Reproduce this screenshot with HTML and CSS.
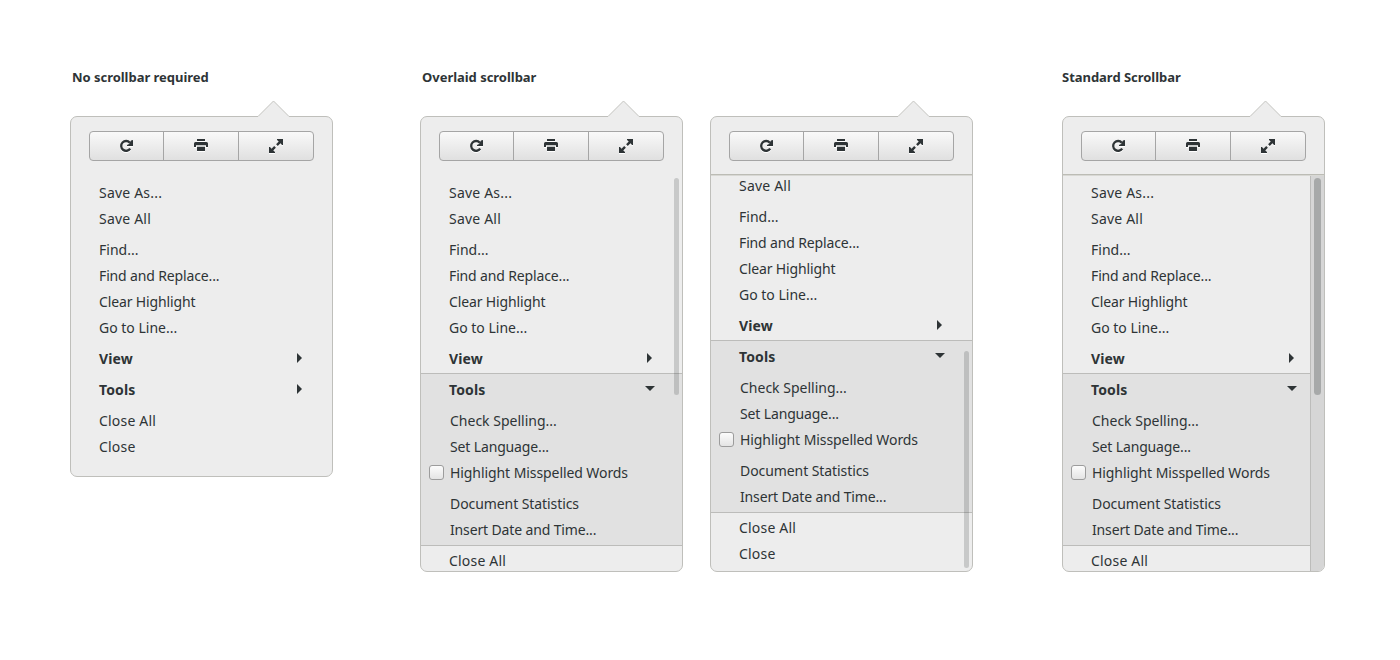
FILE: index.html
```html
<!DOCTYPE html>
<html lang="en">
<head>
<meta charset="utf-8">
<title>Popover scrolling</title>
<link rel="stylesheet" href="styles.css">
</head>
<body>
<svg class="defs" aria-hidden="true">
  <symbol id="refresh" viewBox="0 0 16 16"><path d="M11.200 10.600A4.900 4.900 0 1 1 10.800 4.700" fill="none" stroke="currentColor" stroke-width="2.300"/><path d="M14 2v6H8V7l2-1 2-3.500z"/></symbol>
  <symbol id="print" viewBox="0 0 16 16"><path d="M4 1h8v2H4zM2.500 4h11Q15 4 15 5.500V9h-2V7.500H3V9H1V5.500Q1 4 2.500 4zM4 8.500h8v4q0 .5-.5.5h-7q-.5 0-.5-.5z"/><path d="M3 7.500h10v1H3z" fill="#fff"/></symbol>
  <symbol id="expand" viewBox="0 0 16 16"><path d="M9 1h6v6h-1l-1.500-1.700-2.700 2.600-1.700-1.700 2.600-2.700L9 2zM1 9h1l1.500 1.700 2.700-2.600 1.700 1.700-2.600 2.700L7 14v1H1z"/></symbol>
  <symbol id="tip" viewBox="0 0 32 17"><path class="tip-fill" d="M0 17v-1L15.500 .7 31 16v1z"/><path class="tip-line" d="M0 16.500L15.500 1 31 16.500"/></symbol>
</svg>
<main class="board">
  <section class="example first">
    <h2>No scrollbar required</h2>
    <div class="pops">
      <div class="popover short">
        <svg class="tip"><use href="#tip"/></svg>
        <div class="head"><div class="buttons"><button><svg><use href="#refresh"/></svg></button><button><svg><use href="#print"/></svg></button><button><svg><use href="#expand"/></svg></button></div></div>
        <div class="view"><div class="list">
          <div class="group"><p class="wide">Save As...</p><p class="wide">Save All</p></div>
          <div class="group"><p>Find...</p><p class="tight">Find and Replace...</p><p class="tight">Clear Highlight</p><p>Go to Line...</p></div>
          <div class="group"><p class="sub">View<i class="right"></i></p></div>
          <div class="group"><p class="sub">Tools<i class="right"></i></p></div>
          <div class="group"><p class="wide">Close All</p><p class="wide">Close</p></div>
        </div></div>
      </div>
    </div>
  </section>

  <section class="example second">
    <h2>Overlaid scrollbar</h2>
    <div class="pops">
      <div class="popover">
        <svg class="tip"><use href="#tip"/></svg>
        <div class="head"><div class="buttons"><button><svg><use href="#refresh"/></svg></button><button><svg><use href="#print"/></svg></button><button><svg><use href="#expand"/></svg></button></div></div>
        <div class="view"><div class="list">
          <div class="group"><p class="wide">Save As...</p><p class="wide">Save All</p></div>
          <div class="group"><p>Find...</p><p class="tight">Find and Replace...</p><p class="tight">Clear Highlight</p><p>Go to Line...</p></div>
          <p class="sub">View<i class="right"></i></p>
          <div class="open">
            <p class="sub">Tools<i class="down"></i></p>
            <div class="group inner"><p>Check Spelling...</p><p class="tight">Set Language...</p><p class="check snug"><b class="box"></b>Highlight Misspelled Words</p></div>
            <div class="group inner"><p class="snug">Document Statistics</p><p class="tight">Insert Date and Time...</p></div>
          </div>
          <p class="wide">Close All</p>
        </div><span class="thumb top"></span></div>
      </div>
      <div class="popover ruled">
        <svg class="tip"><use href="#tip"/></svg>
        <div class="head"><div class="buttons"><button><svg><use href="#refresh"/></svg></button><button><svg><use href="#print"/></svg></button><button><svg><use href="#expand"/></svg></button></div></div>
        <div class="view"><div class="list scrolled">
          <div class="group"><p class="wide">Save All</p></div>
          <div class="group"><p>Find...</p><p class="tight">Find and Replace...</p><p class="tight">Clear Highlight</p><p>Go to Line...</p></div>
          <p class="sub">View<i class="right"></i></p>
          <div class="open">
            <p class="sub">Tools<i class="down"></i></p>
            <div class="group inner"><p>Check Spelling...</p><p class="tight">Set Language...</p><p class="check snug"><b class="box"></b>Highlight Misspelled Words</p></div>
            <div class="group inner"><p class="snug">Document Statistics</p><p class="tight">Insert Date and Time...</p></div>
          </div>
          <p class="wide">Close All</p><p class="wide">Close</p>
        </div><span class="thumb bottom"></span></div>
      </div>
    </div>
  </section>

  <section class="example third">
    <h2>Standard Scrollbar</h2>
    <div class="pops">
      <div class="popover ruled">
        <svg class="tip"><use href="#tip"/></svg>
        <div class="head"><div class="buttons"><button><svg><use href="#refresh"/></svg></button><button><svg><use href="#print"/></svg></button><button><svg><use href="#expand"/></svg></button></div></div>
        <div class="view"><div class="list">
          <div class="group"><p class="wide">Save As...</p><p class="wide">Save All</p></div>
          <div class="group"><p>Find...</p><p class="tight">Find and Replace...</p><p class="tight">Clear Highlight</p><p>Go to Line...</p></div>
          <p class="sub">View<i class="right"></i></p>
          <div class="open">
            <p class="sub">Tools<i class="down"></i></p>
            <div class="group inner"><p>Check Spelling...</p><p class="tight">Set Language...</p><p class="check snug"><b class="box"></b>Highlight Misspelled Words</p></div>
            <div class="group inner"><p class="snug">Document Statistics</p><p class="tight">Insert Date and Time...</p></div>
          </div>
          <p class="wide">Close All</p>
        </div><div class="trough"><span class="slider"></span></div></div>
      </div>
    </div>
  </section>
</main>
</body>
</html>
```
FILE: styles.css
```css
* { box-sizing: border-box; }
body {
  margin: 0;
  background: #fff;
  color: #2e3436;
  font: 14px/26px "Noto Sans", "Open Sans", sans-serif;
}
.defs { display: block; width: 0; height: 0; }
.board { display: flex; height: 660px; padding: 66px 0 0 70px; overflow: hidden; }
.second { margin-left: 87px; }
.third { margin-left: 89px; }
h2 { margin: 0 0 28px; padding-left: 2px; font-size: 13px; line-height: 22px; font-weight: 700; letter-spacing: -0.03px; }
.third h2 { padding-left: 0; }
.pops { display: flex; gap: 27px; }

.popover {
  position: relative;
  display: flex;
  flex-direction: column;
  width: 263px;
  height: 456px;
  border: 1px solid #bfbfbb;
  border-radius: 7px;
  background: #ededed;
}
.popover.short { height: 361px; }
.tip { position: absolute; left: 187px; top: -17px; width: 32px; height: 17px; }
.tip-fill { fill: #ededed; }
.tip-line { fill: none; stroke: #c6c6c2; }

.head { flex: none; height: 59px; padding: 14px 18px 0; }
.ruled .head { border-bottom: 1px solid #bcbcb5; height: 58px; }
.ruled .view { border-top: 1px solid #d8d8d4; }
.ruled .list { padding-top: 3px; }
.buttons {
  display: grid;
  grid-template-columns: 74px 75px 74px;
  height: 30px;
  border: 1px solid #a5a5a5;
  border-radius: 4px;
  background: linear-gradient(#f9f9f9, #e0e0e0);
  overflow: hidden;
}
button {
  display: flex;
  align-items: center;
  justify-content: center;
  padding: 0;
  border: 0;
  border-right: 1px solid #a5a5a5;
  background: none;
  color: #2e3436;
}
button:first-child { padding-left: 1px; }
button:last-child { border-right: 0; }
button svg { width: 16px; height: 16px; fill: currentColor; filter: drop-shadow(0 1px 0 #fff); }

.view { position: relative; display: flex; flex: 1; min-height: 0; border-radius: 0 0 6px 6px; overflow: hidden; }
.list { flex: 1; padding-top: 3px; }
.list.scrolled { margin-top: -7px; }
.group { margin-bottom: 5px; }
p { display: flex; align-items: center; height: 26px; margin: 0; padding-left: 28px; line-height: 26px; padding-top: 1px; white-space: nowrap; }
.wide { letter-spacing: .2px; }
.snug { letter-spacing: -.08px; }
.tight { letter-spacing: -.14px; }
.sub { font-weight: 700; letter-spacing: .1px; position: relative; }
.inner p { padding-left: 29px; }
.open { margin: 2px 0 1px; padding: 2px 0 3px; border: solid #bcbcba; border-width: 1px 0; background: #e1e1e1; }
.open .sub { margin-bottom: 5px; }
.open .group:last-child { margin-bottom: 0; }

.right { position: absolute; left: 226px; top: 8px; border: solid transparent; border-width: 5px 0 5px 5px; border-left-color: #2e3436; }
.down { position: absolute; left: 223.500px; top: 10px; border: solid transparent; border-width: 5px 5px 0; border-top-color: #2e3436; }
.inner .check { padding-left: 8px; gap: 6px; }
.box { width: 15px; height: 15px; margin-top: -1px; border: 1px solid #9c9c9c; border-radius: 3px; background: linear-gradient(#fcfcfc, #e4e4e4); }

.thumb { position: absolute; right: 3px; width: 5px; height: 217px; border-radius: 3px; background: rgba(70, 75, 75, .22); }
.thumb.top { top: 2px; }
.thumb.bottom { bottom: 3px; }
.trough { flex: none; width: 14px; padding: 2px 0 0 3px; border-left: 1px solid #bcbcba; background: #d6d6d6; }
.slider { display: block; width: 7px; height: 217px; border-radius: 4px; background: #a7a9a9; }
```
